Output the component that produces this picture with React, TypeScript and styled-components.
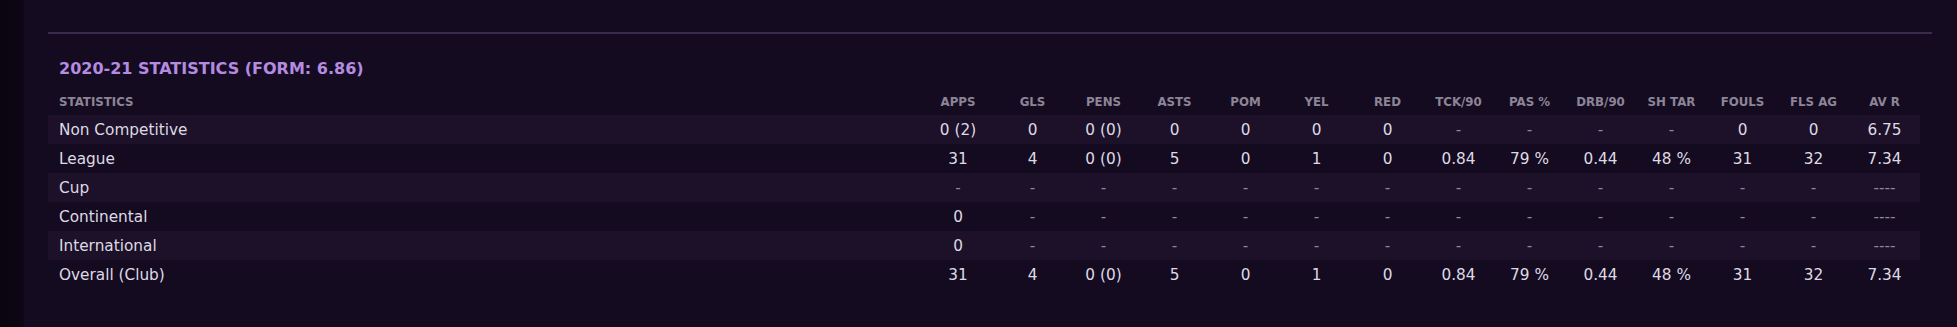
import styled, { createGlobalStyle } from 'styled-components';

const GlobalStyle = createGlobalStyle`
  html, body {
    margin: 0;
    padding: 0;
    background: #150b20;
  }
  body {
    font-family: "DejaVu Sans", "Liberation Sans", Arial, sans-serif;
  }
`;

const COLUMNS = [
  'APPS', 'GLS', 'PENS', 'ASTS', 'POM', 'YEL', 'RED',
  'TCK/90', 'PAS %', 'DRB/90', 'SH TAR', 'FOULS', 'FLS AG', 'AV R',
];

const ROWS: { label: string; values: string[] }[] = [
  { label: 'Non Competitive', values: ['0 (2)', '0', '0 (0)', '0', '0', '0', '0', '-', '-', '-', '-', '0', '0', '6.75'] },
  { label: 'League', values: ['31', '4', '0 (0)', '5', '0', '1', '0', '0.84', '79 %', '0.44', '48 %', '31', '32', '7.34'] },
  { label: 'Cup', values: ['-', '-', '-', '-', '-', '-', '-', '-', '-', '-', '-', '-', '-', '----'] },
  { label: 'Continental', values: ['0', '-', '-', '-', '-', '-', '-', '-', '-', '-', '-', '-', '-', '----'] },
  { label: 'International', values: ['0', '-', '-', '-', '-', '-', '-', '-', '-', '-', '-', '-', '-', '----'] },
  { label: 'Overall (Club)', values: ['31', '4', '0 (0)', '5', '0', '1', '0', '0.84', '79 %', '0.44', '48 %', '31', '32', '7.34'] },
];

const App = () => {
  return (
    <>
      <GlobalStyle />
      <Page>
        <SideStrip />
        <Panel>
          <Divider />
          <Section>
            <Title>2020-21 Statistics (Form: 6.86)</Title>
            <Table>
              <HeaderRow>
                <HeadCell $align="left">Statistics</HeadCell>
                {COLUMNS.map(c => (
                  <HeadCell key={c}>{c}</HeadCell>
                ))}
              </HeaderRow>
              {ROWS.map((r, i) => (
                <Row key={r.label} $striped={i % 2 === 0}>
                  <LabelCell>{r.label}</LabelCell>
                  {r.values.map((v, j) => (
                    <ValueCell key={j} $dim={v.startsWith('-')}>
                      {v}
                    </ValueCell>
                  ))}
                </Row>
              ))}
            </Table>
          </Section>
        </Panel>
      </Page>
    </>
  );
};

const Page = styled.div`
  display: flex;
  min-height: 327px;
  width: 100vw;
  overflow: hidden;
`;

const SideStrip = styled.div`
  width: 24px;
  flex-shrink: 0;
  background: linear-gradient(to right, #0a0510, #0d0716);
`;

const Panel = styled.div`
  flex: 1;
  background: #150b20;
  padding: 32px 25px 0 24px;
`;

const Divider = styled.div`
  height: 2px;
  background: #3a2d4c;
`;

const Section = styled.div`
  display: flex;
  flex-direction: column;
  margin-right: 12px;
`;

const Title = styled.h2`
  margin: 25px 0 0 11px;
  font-size: 16px;
  line-height: 20px;
  font-weight: 700;
  text-transform: uppercase;
  color: #b48be0;
`;

const grid = `
  display: grid;
  grid-template-columns: 1fr 78px repeat(13, 71px);
  align-items: center;
`;

const Table = styled.div`
  display: flex;
  flex-direction: column;
  margin-top: 16px;
`;

const HeaderRow = styled.div`
  ${grid}
  height: 14px;
  margin-bottom: 6px;
`;

const HeadCell = styled.div<{ $align?: 'left' | 'center' }>`
  font-size: 11.8px;
  font-weight: 700;
  text-transform: uppercase;
  color: #8c8597;
  text-align: ${p => p.$align ?? 'center'};
  padding-left: ${p => (p.$align === 'left' ? '11px' : '0')};
  white-space: nowrap;
`;

const Row = styled.div<{ $striped: boolean }>`
  ${grid}
  height: 29px;
  background: ${p => (p.$striped ? '#1c1128' : 'transparent')};
`;

const LabelCell = styled.div`
  padding-left: 11px;
  font-size: 15.3px;
  color: #dedae5;
`;

const ValueCell = styled.div<{ $dim: boolean }>`
  text-align: center;
  font-size: 15.3px;
  color: ${p => (p.$dim ? '#8f889a' : '#dedae5')};
  white-space: nowrap;
`;

export default App;
